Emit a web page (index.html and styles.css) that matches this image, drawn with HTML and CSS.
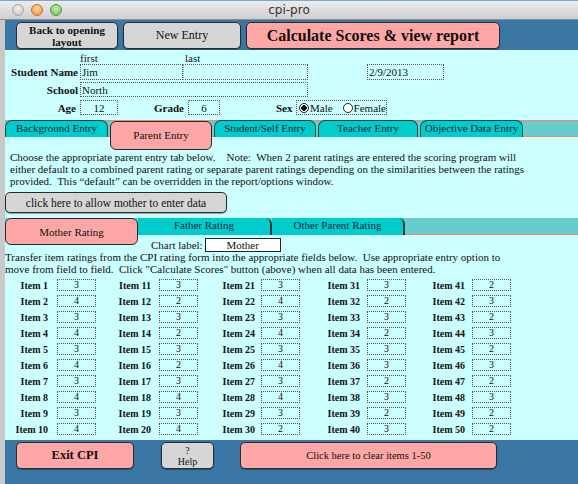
FILE: index.html
```html
<!DOCTYPE html>
<html>
<head>
<meta charset="utf-8">
<link rel="stylesheet" href="styles.css">
</head>
<body>
<div class="window">
  <div class="titlebar">
    <div class="lights">
      <span class="light gray"></span>
      <span class="light orange"></span>
      <span class="light green"></span>
    </div>
    <div class="title">cpi-pro</div>
  </div>
  <div class="frame">
    <div class="strip"></div>
    <div class="main">
      <div class="header">
        <div class="btn gray-btn back">Back to opening<br>layout</div>
        <div class="btn gray-btn newentry">New Entry</div>
        <div class="btn pink-btn calc">Calculate Scores &amp; view report</div>
      </div>
      <div class="body">
        <div class="namelabels">
          <span class="lbl-first">first</span>
          <span class="lbl-last">last</span>
        </div>
        <div class="row row1">
          <span class="flabel">Student Name</span>
          <span class="field f-first">Jim</span>
          <span class="field f-last"></span>
          <span class="field f-date">2/9/2013</span>
        </div>
        <div class="row row2">
          <span class="flabel">School</span>
          <span class="field f-school">North</span>
        </div>
        <div class="row row3">
          <span class="flabel age">Age</span>
          <span class="field f-age center">12</span>
          <span class="flabel grade">Grade</span>
          <span class="field f-grade center">6</span>
          <span class="flabel sex">Sex</span>
          <span class="field f-sex">
            <span class="radio on"></span><span class="rtext">Male</span>
            <span class="radio off"></span><span class="rtext">Female</span>
          </span>
        </div>

        <div class="tabrow">
          <div class="tab t1">Background Entry</div>
          <div class="tab active t2">Parent Entry</div>
          <div class="tab t3">Student/Self Entry</div>
          <div class="tab t4">Teacher Entry</div>
          <div class="tab t5">Objective Data Entry</div>
        </div>

        <p class="para">Choose the appropriate parent entry tab below.&nbsp;&nbsp;&nbsp; Note:&nbsp; When 2 parent ratings are entered the scoring program will either default to a combined parent rating or separate parent ratings depending on the similarities between the ratings provided.&nbsp; This “default” can be overridden in the report/options window.</p>

        <div class="btn gray-btn allow">click here to allow mother to enter data</div>

        <div class="subtabrow">
          <div class="stab active s1">Mother Rating</div>
          <div class="stab s2">Father Rating</div>
          <div class="stab s3">Other Parent Rating</div>
        </div>

        <div class="chartrow">
          <span class="chartlbl">Chart label:</span>
          <span class="chartbox">Mother</span>
        </div>

        <p class="para2">Transfer item ratings from the CPI rating form into the appropriate fields below.&nbsp; Use appropriate entry option to move from field to field.&nbsp; Click "Calculate Scores" button (above) when all data has been entered.</p>

        <div class="grid">
          <span class="il">Item 1</span><span class="ib">3</span>
          <span class="il">Item 11</span><span class="ib">3</span>
          <span class="il">Item 21</span><span class="ib">3</span>
          <span class="il">Item 31</span><span class="ib">3</span>
          <span class="il">Item 41</span><span class="ib">2</span>

          <span class="il">Item 2</span><span class="ib">4</span>
          <span class="il">Item 12</span><span class="ib">2</span>
          <span class="il">Item 22</span><span class="ib">4</span>
          <span class="il">Item 32</span><span class="ib">2</span>
          <span class="il">Item 42</span><span class="ib">3</span>

          <span class="il">Item 3</span><span class="ib">3</span>
          <span class="il">Item 13</span><span class="ib">3</span>
          <span class="il">Item 23</span><span class="ib">3</span>
          <span class="il">Item 33</span><span class="ib">3</span>
          <span class="il">Item 43</span><span class="ib">2</span>

          <span class="il">Item 4</span><span class="ib">4</span>
          <span class="il">Item 14</span><span class="ib">2</span>
          <span class="il">Item 24</span><span class="ib">4</span>
          <span class="il">Item 34</span><span class="ib">2</span>
          <span class="il">Item 44</span><span class="ib">3</span>

          <span class="il">Item 5</span><span class="ib">3</span>
          <span class="il">Item 15</span><span class="ib">3</span>
          <span class="il">Item 25</span><span class="ib">3</span>
          <span class="il">Item 35</span><span class="ib">3</span>
          <span class="il">Item 45</span><span class="ib">2</span>

          <span class="il">Item 6</span><span class="ib">4</span>
          <span class="il">Item 16</span><span class="ib">2</span>
          <span class="il">Item 26</span><span class="ib">4</span>
          <span class="il">Item 36</span><span class="ib">3</span>
          <span class="il">Item 46</span><span class="ib">3</span>

          <span class="il">Item 7</span><span class="ib">3</span>
          <span class="il">Item 17</span><span class="ib">3</span>
          <span class="il">Item 27</span><span class="ib">3</span>
          <span class="il">Item 37</span><span class="ib">2</span>
          <span class="il">Item 47</span><span class="ib">2</span>

          <span class="il">Item 8</span><span class="ib">4</span>
          <span class="il">Item 18</span><span class="ib">4</span>
          <span class="il">Item 28</span><span class="ib">4</span>
          <span class="il">Item 38</span><span class="ib">3</span>
          <span class="il">Item 48</span><span class="ib">3</span>

          <span class="il">Item 9</span><span class="ib">3</span>
          <span class="il">Item 19</span><span class="ib">3</span>
          <span class="il">Item 29</span><span class="ib">3</span>
          <span class="il">Item 39</span><span class="ib">2</span>
          <span class="il">Item 49</span><span class="ib">2</span>

          <span class="il">Item 10</span><span class="ib">4</span>
          <span class="il">Item 20</span><span class="ib">4</span>
          <span class="il">Item 30</span><span class="ib">2</span>
          <span class="il">Item 40</span><span class="ib">3</span>
          <span class="il">Item 50</span><span class="ib">2</span>
        </div>
      </div>
      <div class="footer">
        <div class="btn pink-btn exit">Exit CPI</div>
        <div class="btn gray-btn help">?<br>Help</div>
        <div class="btn pink-btn clear">Click here to clear items 1-50</div>
      </div>
    </div>
  </div>
</div>
</body>
</html>
```
FILE: styles.css
```css
html, body {
  margin: 0;
  padding: 0;
}
body {
  font-family: "Liberation Serif", "Times New Roman", serif;
  color: #111;
  background: #3b77a5;
}
.window {
  width: 578px;
  height: 484px;
  overflow: hidden;
  display: flex;
  flex-direction: column;
}
.titlebar {
  height: 20px;
  flex: none;
  display: flex;
  align-items: center;
  background: linear-gradient(#ececec, #cfcfcf);
  border-top: 1px solid #7ea6c8;
  box-sizing: border-box;
  border-bottom: 1px solid #8e8e8e;
}
.lights {
  display: flex;
  gap: 7px;
  padding-left: 12px;
  width: 60px;
}
.light {
  width: 12px;
  height: 12px;
  border-radius: 50%;
  box-sizing: border-box;
}
.light.gray { background: radial-gradient(circle at 50% 35%, #f2f2f2, #bdbdbd); border: 1px solid #a8a8a8; }
.light.orange { background: radial-gradient(circle at 50% 35%, #ffd9a0, #f08a3a); border: 1px solid #c96a2a; }
.light.green { background: radial-gradient(circle at 50% 35%, #c8f0b0, #5fb94a); border: 1px solid #4b9a3a; }
.title {
  flex: 1;
  text-align: center;
  font-family: "DejaVu Sans", sans-serif;
  font-size: 12px;
  color: #333;
  margin-right: 72px;
}
.frame {
  flex: 1;
  display: flex;
}
.strip {
  width: 5px;
  flex: none;
  background: #c9c9c9;
}
.main {
  flex: 1;
  display: flex;
  flex-direction: column;
}
.header {
  height: 30px;
  box-sizing: border-box;
  background: #3b77a5;
  display: flex;
  align-items: flex-start;
  padding: 2px 0 0 11px;
  gap: 5px;
}
.btn {
  box-sizing: border-box;
  border: 1px solid #2a2a2a;
  border-radius: 5px;
  display: flex;
  align-items: center;
  justify-content: center;
  text-align: center;
  box-shadow: 0 1px 1px rgba(0,0,0,0.35);
}
.gray-btn { background: #d6d6d6; }
.pink-btn { background: #ffa6a6; }
.back {
  width: 102px; height: 27px;
  font-weight: bold; font-size: 11px; line-height: 12px;
}
.newentry {
  width: 118px; height: 27px;
  font-size: 12px;
}
.calc {
  width: 254px; height: 27px;
  font-weight: bold; font-size: 16px;
}
.body {
  height: 390px;
  box-sizing: border-box;
  background: #ccffff;
  display: flex;
  flex-direction: column;
}
.namelabels {
  height: 12px;
  margin-top: 2px;
  font-size: 11px;
  line-height: 12px;
  display: flex;
}
.lbl-first { margin-left: 75px; width: 105px; }
.row {
  display: flex;
  align-items: center;
}
.row1 { height: 16px; }
.row2 { height: 15px; margin-top: 2px; }
.row3 { height: 15px; margin-top: 3px; }
.flabel {
  width: 73px;
  text-align: right;
  font-weight: bold;
  font-size: 11px;
  margin-right: 2px;
}
.field {
  box-sizing: border-box;
  height: 100%;
  border: 1px dotted #555;
  font-size: 11px;
  display: flex;
  align-items: center;
  padding-left: 1px;
}
.center { justify-content: center; padding-left: 0; }
.f-first { width: 103px; }
.f-last { width: 125px; border-left: 1px dotted #999; }
.f-date { width: 77px; margin-left: 59px; }
.f-school { width: 228px; }
.flabel.age { width: 71px; margin-right: 4px; }
.f-age { width: 38px; }
.flabel.grade { width: 31px; margin-left: 36px; margin-right: 3px; text-align: left; }
.f-grade { width: 32px; }
.flabel.sex { width: 18px; margin-left: 56px; margin-right: 2px; text-align: left; }
.f-sex { width: 91px; padding-left: 2px; }
.radio {
  width: 10px;
  height: 10px;
  border-radius: 50%;
  box-sizing: border-box;
  border: 1px solid #222;
  background: #fff;
  flex: none;
}
.radio.on {
  background: radial-gradient(circle, #111 0 2.6px, #fff 3px);
}
.radio.off { margin-left: 10px; }
.rtext { margin-left: 1px; font-size: 11px; }

.tabrow {
  margin-top: 5px;
  height: 30px;
  display: flex;
  align-items: flex-start;
  gap: 2px;
  background: linear-gradient(to bottom, #f58a68 0 1px, #66cccc 1px 16px, #f58a68 16px 17px, transparent 17px) no-repeat;
}
.tab {
  box-sizing: border-box;
  height: 17px;
  background: #00cccc;
  border: 1px solid #1d4b4b;
  border-bottom: none;
  border-radius: 7px 7px 0 0;
  font-size: 11px;
  text-align: center;
  line-height: 15px;
  color: #0d2a3a;
  white-space: nowrap;
}
.tab.active {
  height: 29px;
  margin-top: 1px;
  background: #ffa6a6;
  border: 1px solid #2a2a2a;
  border-radius: 6px;
  line-height: 26px;
  color: #111;
}
.t1 { width: 103px; }
.t2 { width: 102px; }
.t3 { width: 102px; }
.t4 { width: 100px; }
.t5 { width: 103px; }

.para {
  margin: 1px 0 0 0;
  padding-left: 5px;
  padding-right: 50px;
  font-size: 11px;
  line-height: 12px;
  height: 39px;
}
.allow {
  width: 222px;
  height: 21px;
  font-size: 11.5px;
  margin-top: 2px;
}
.subtabrow {
  margin-top: 5px;
  height: 18px;
  display: flex;
  align-items: flex-start;
  background: linear-gradient(to bottom, #66cccc 0 16px, #f58a68 16px 17px, transparent 17px) no-repeat;
}
.stab {
  box-sizing: border-box;
  height: 17px;
  background: #00cccc;
  border-right: 2px solid #1d3b3b;
  border-radius: 0 6px 0 0;
  font-size: 11px;
  line-height: 15px;
  text-align: center;
  color: #0d2a3a;
}
.stab.active {
  height: 27px;
  background: #ffa6a6;
  border: 1px solid #2a2a2a;
  border-radius: 6px;
  line-height: 26px;
  color: #111;
}
.s1 { width: 133px; }
.s2 { width: 134px; }
.s3 { width: 133px; }
.chartrow {
  margin-top: 2px;
  height: 14px;
  display: flex;
  align-items: center;
  padding-left: 146px;
  font-size: 11px;
  white-space: nowrap;
}
.chartlbl { margin-right: 2px; }
.chartbox {
  box-sizing: border-box;
  width: 76px;
  height: 14px;
  background: #fff;
  border: 1px solid #222;
  text-align: center;
  line-height: 12px;
}
.para2 {
  margin: -1px 0 0 0;
  padding-right: 66px;
  font-size: 11px;
  line-height: 12px;
  height: 24px;
}
.grid {
  margin-top: 2px;
  display: grid;
  grid-template-columns: 43px 48px 55px 47px 57px 45px 60px 46px 59px 46px;
  grid-auto-rows: 16px;
  align-items: center;
}
.il {
  text-align: right;
  font-weight: bold;
  font-size: 10px;
}
.ib {
  justify-self: end;
  box-sizing: border-box;
  width: 39px;
  height: 12px;
  border: 1px dotted #555;
  font-size: 10px;
  line-height: 10px;
  text-align: center;
}
.footer {
  flex: 1;
  background: #3b77a5;
  display: flex;
  align-items: flex-start;
  padding: 2px 0 0 11px;
}
.exit {
  width: 118px; height: 27px;
  font-weight: bold; font-size: 12.5px;
}
.help {
  width: 53px; height: 27px;
  margin-left: 27px;
  font-size: 10px; line-height: 11px;
}
.clear {
  width: 257px; height: 27px;
  margin-left: 26px;
  font-size: 10.5px;
}
```
